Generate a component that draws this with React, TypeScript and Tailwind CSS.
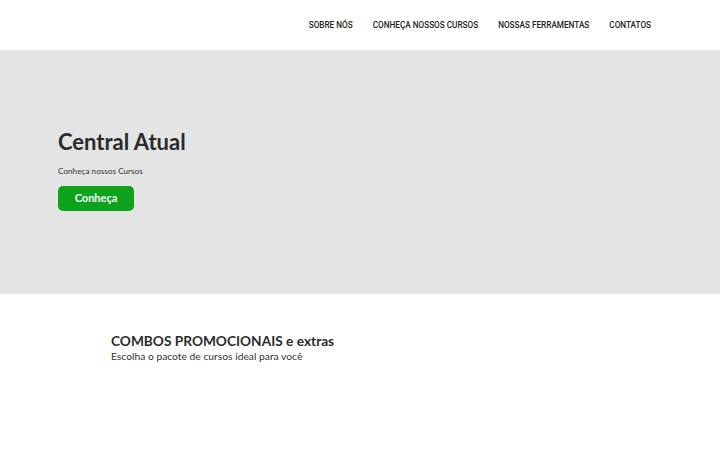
const nav = ["SOBRE NÓS", "CONHEÇA NOSSOS CURSOS", "NOSSAS FERRAMENTAS", "CONTATOS"];

export default function App() {
  return (
    <div className="min-h-screen bg-white font-['Lato',sans-serif] text-[#2b2b2b]">
      <header className="flex h-[50px] items-center justify-end bg-white pr-[69px]">
        <nav className="flex gap-[20px] font-['Roboto',sans-serif]">
          {nav.map((item) => (
            <a key={item} href="#" className="text-[8.2px] font-medium text-[#222]">
              {item}
            </a>
          ))}
        </nav>
      </header>

      <section className="flex h-[244px] flex-col justify-center bg-[#e5e4e5] pl-[58px] pb-[2px]">
        <h1 className="text-[22px] font-bold leading-none text-[#2a2a2d]">Central Atual</h1>
        <p className="mt-[12px] text-[8.2px] text-[#333]">Conheça nossos Cursos</p>
        <a
          href="#"
          className="mt-[8px] flex h-[25px] w-[76px] items-center justify-center rounded-[5px] bg-[#0ca21c] text-[11px] font-bold text-white"
        >
          Conheça
        </a>
      </section>

      <section className="pl-[111px] pt-[38px]">
        <h2 className="text-[13.7px] font-bold leading-tight text-[#2b2b2b]">COMBOS PROMOCIONAIS e extras</h2>
        <p className="text-[10.3px] text-[#333]">Escolha o pacote de cursos ideal para você</p>
      </section>
    </div>
  );
}
